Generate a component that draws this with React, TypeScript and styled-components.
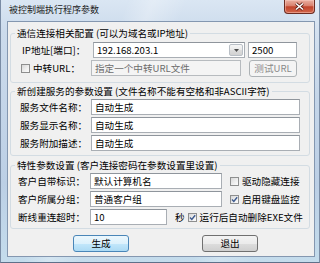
import { FC, ReactNode } from 'react'
import styled, { createGlobalStyle } from 'styled-components'

const GlobalStyle = createGlobalStyle`
  html, body {
    margin: 0;
    padding: 0;
  }
  body {
    width: 320px;
    height: 263px;
    overflow: hidden;
    background: #c3d4e7;
  }
`

const Window = styled.div`
  width: 320px;
  height: 263px;
  box-sizing: border-box;
  display: flex;
  flex-direction: column;
  border: 1px solid #7a8ca5;
  border-top: none;
  border-bottom-color: #5e7089;
  background: linear-gradient(
      112deg,
      transparent 30%,
      rgba(255, 255, 255, 0.28) 36%,
      transparent 44%,
      transparent 70%,
      rgba(255, 255, 255, 0.2) 76%,
      transparent 84%
    ),
    linear-gradient(180deg, #dae6f3 0%, #ccdbec 12%, #bccfe5 70%, #c4dcec 100%);
  font-family: 'Noto Sans CJK SC', 'Liberation Sans', sans-serif;
  font-size: 9.6px;
  color: #000;
`

const TitleBar = styled.div`
  height: 21px;
  flex-shrink: 0;
  display: flex;
  align-items: flex-start;
  justify-content: space-between;
`

const Title = styled.div`
  padding: 4px 0 0 8px;
  font-size: 9px;
  line-height: 12px;
  color: #1b1b1b;
  white-space: nowrap;
`

const CloseButton = styled.div`
  width: 31px;
  height: 14px;
  margin-right: 4px;
  box-sizing: border-box;
  display: flex;
  align-items: center;
  justify-content: center;
  border: 1px solid #6b2c22;
  border-top: none;
  border-radius: 0 0 4px 4px;
  background: linear-gradient(180deg, #e9b0a2 0%, #d9806d 45%, #c1442c 52%, #d2664b 100%);
  box-shadow: inset 0 0 0 1px rgba(255, 210, 200, 0.45);
`

const Client = styled.div`
  flex: 1;
  margin: 0 4px 5px 6px;
  display: flex;
  flex-direction: column;
  border: 1px solid #8497b0;
  background: #f0f0f0;
`

const Group = styled.fieldset<{ $top: number; $pt: number; $pb: number }>`
  margin: ${({ $top }) => $top}px 4px 0 2px;
  padding: ${({ $pt }) => $pt}px 0 ${({ $pb }) => $pb}px 0;
  min-width: 0;
  border: 1px solid #d3dce3;
  border-radius: 3px;
`

const Legend = styled.legend`
  margin-left: 4px;
  padding: 0 2px;
  height: 12px;
  line-height: 12px;
  white-space: nowrap;
`

const Rows = styled.div`
  display: flex;
  flex-direction: column;
  gap: 2px;
`

const Row = styled.div<{ $indent: number }>`
  display: flex;
  align-items: center;
  height: 16px;
  padding-left: ${({ $indent }) => $indent}px;
`

const Label = styled.span<{ $w?: number; $ml?: number }>`
  width: ${({ $w }) => ($w ? `${$w}px` : 'auto')};
  margin-left: ${({ $ml }) => $ml ?? 0}px;
  flex-shrink: 0;
  line-height: 12px;
  white-space: nowrap;
`

const TextBox = styled.input<{ $w: number; $ml?: number }>`
  width: ${({ $w }) => $w}px;
  height: 16px;
  margin: 0 0 0 ${({ $ml }) => $ml ?? 0}px;
  padding: 0 3px;
  box-sizing: border-box;
  border: 1px solid #a9aeb4;
  border-top-color: #8f959c;
  border-radius: 0;
  background: #fff;
  font: inherit;
  line-height: 14px;
  color: #000;
  outline: none;

  &:disabled {
    background: #f4f4f4;
    border-color: #b7bbbf;
    color: #6d6d6d;
  }
`

const Combo = styled.div<{ $w: number }>`
  width: ${({ $w }) => $w}px;
  height: 16px;
  box-sizing: border-box;
  display: flex;
  align-items: center;
  justify-content: space-between;
  padding: 0 1px 0 3px;
  border: 1px solid #a9aeb4;
  border-top-color: #8f959c;
  background: #fff;
`

const DropButton = styled.span`
  width: 14px;
  height: 12px;
  box-sizing: border-box;
  display: flex;
  align-items: center;
  justify-content: center;
  border: 1px solid #b9bfc6;
  border-radius: 2px;
  background: linear-gradient(180deg, #f6f6f6 0%, #e9e9e9 50%, #dcdcdc 51%, #d2d2d2 100%);
`

const Button = styled.button<{ $w: number; $ml?: number; $primary?: boolean }>`
  width: ${({ $w }) => $w}px;
  height: 17px;
  margin: 0 0 0 ${({ $ml }) => $ml ?? 0}px;
  padding: 0;
  box-sizing: border-box;
  border: 1px solid ${({ $primary }) => ($primary ? '#4a86b8' : '#707070')};
  border-radius: 3px;
  background: ${({ $primary }) =>
    $primary
      ? 'linear-gradient(180deg, #ecf7fd 0%, #dcf1fc 50%, #c3e7fb 51%, #acdaf4 100%)'
      : 'linear-gradient(180deg, #f3f3f3 0%, #ebebeb 50%, #dddddd 51%, #cfcfcf 100%)'};
  font: inherit;
  line-height: 15px;
  color: #000;

  &:disabled {
    border-color: #adb2b5;
    background: #f4f4f4;
    color: #8a8a8a;
  }
`

const Buttons = styled.div`
  display: flex;
  margin: 6px 0 0 65px;
`

const CheckBox = styled.span<{ $ml?: number }>`
  width: 9px;
  height: 9px;
  margin-left: ${({ $ml }) => $ml ?? 0}px;
  flex-shrink: 0;
  box-sizing: border-box;
  display: flex;
  align-items: center;
  justify-content: center;
  border: 1px solid #8e8f8f;
  background: linear-gradient(135deg, #d8d8d8 0%, #f0f0f0 60%, #fcfcfc 100%);
`

const CheckText = styled.span`
  margin-left: 3px;
  line-height: 12px;
  white-space: nowrap;
`

const Check: FC<{ checked?: boolean; ml?: number; children?: ReactNode }> = ({
  checked,
  ml,
  children,
}) => (
  <>
    <CheckBox $ml={ml}>
      {checked && (
        <svg width="7" height="7" viewBox="0 0 7 7">
          <path d="M1 3.6 L2.8 5.4 L6.2 1.2" fill="none" stroke="#3d5a8e" strokeWidth="1.4" />
        </svg>
      )}
    </CheckBox>
    {children && <CheckText>{children}</CheckText>}
  </>
)

export default function App() {
  return (
    <>
      <GlobalStyle />
      <Window>
        <TitleBar>
          <Title>被控制端执行程序参数</Title>
          <CloseButton>
            <svg width="11" height="9" viewBox="0 0 11 9">
              <path d="M2 1.5 L9 7.5 M9 1.5 L2 7.5" stroke="#5a1f17" strokeWidth="3" />
              <path d="M2 1.5 L9 7.5 M9 1.5 L2 7.5" stroke="#fff" strokeWidth="1.6" />
            </svg>
          </CloseButton>
        </TitleBar>
        <Client>
          <Group $top={5} $pt={3} $pb={6}>
            <Legend>通信连接相关配置 (可以为域名或IP地址)</Legend>
            <Rows>
              <Row $indent={11}>
                <Label $w={71}>IP地址[端口]：</Label>
                <Combo $w={152}>
                  <span>192.168.203.1</span>
                  <DropButton>
                    <svg width="5" height="3" viewBox="0 0 5 3">
                      <path d="M0 0 H5 L2.5 3 Z" fill="#4d4d4d" />
                    </svg>
                  </DropButton>
                </Combo>
                <TextBox $w={49} $ml={3} readOnly defaultValue="2500" />
              </Row>
              <Row $indent={10}>
                <Check />
                <Label $w={58} $ml={3}>
                  中转URL：
                </Label>
                <TextBox $w={150} disabled defaultValue="指定一个中转URL文件" />
                <Button $w={48} $ml={8} disabled>
                  测试URL
                </Button>
              </Row>
            </Rows>
          </Group>

          <Group $top={2} $pt={2} $pb={4}>
            <Legend>新创建服务的参数设置 (文件名称不能有空格和非ASCII字符)</Legend>
            <Rows>
              <Row $indent={9}>
                <Label $w={71}>服务文件名称：</Label>
                <TextBox $w={209} readOnly defaultValue="自动生成" />
              </Row>
              <Row $indent={9}>
                <Label $w={71}>服务显示名称：</Label>
                <TextBox $w={209} readOnly defaultValue="自动生成" />
              </Row>
              <Row $indent={9}>
                <Label $w={71}>服务附加描述：</Label>
                <TextBox $w={209} readOnly defaultValue="自动生成" />
              </Row>
            </Rows>
          </Group>

          <Group $top={3} $pt={2} $pb={3}>
            <Legend>特性参数设置 (客户连接密码在参数设置里设置)</Legend>
            <Rows>
              <Row $indent={7}>
                <Label $w={72}>客户自带标识：</Label>
                <TextBox $w={132} readOnly defaultValue="默认计算机名" />
                <Check ml={8}>驱动隐藏连接</Check>
              </Row>
              <Row $indent={7}>
                <Label $w={72}>客户所属分组：</Label>
                <TextBox $w={132} readOnly defaultValue="普通客户组" />
                <Check checked ml={8}>
                  启用键盘监控
                </Check>
              </Row>
              <Row $indent={7}>
                <Label $w={72}>断线重连超时：</Label>
                <TextBox $w={77} readOnly defaultValue="10" />
                <Label $ml={8}>秒</Label>
                <Check checked ml={3}>
                  运行后自动删除EXE文件
                </Check>
              </Row>
            </Rows>
          </Group>

          <Buttons>
            <Button $w={56} $primary>
              生成
            </Button>
            <Button $w={56} $ml={73}>
              退出
            </Button>
          </Buttons>
        </Client>
      </Window>
    </>
  )
}
